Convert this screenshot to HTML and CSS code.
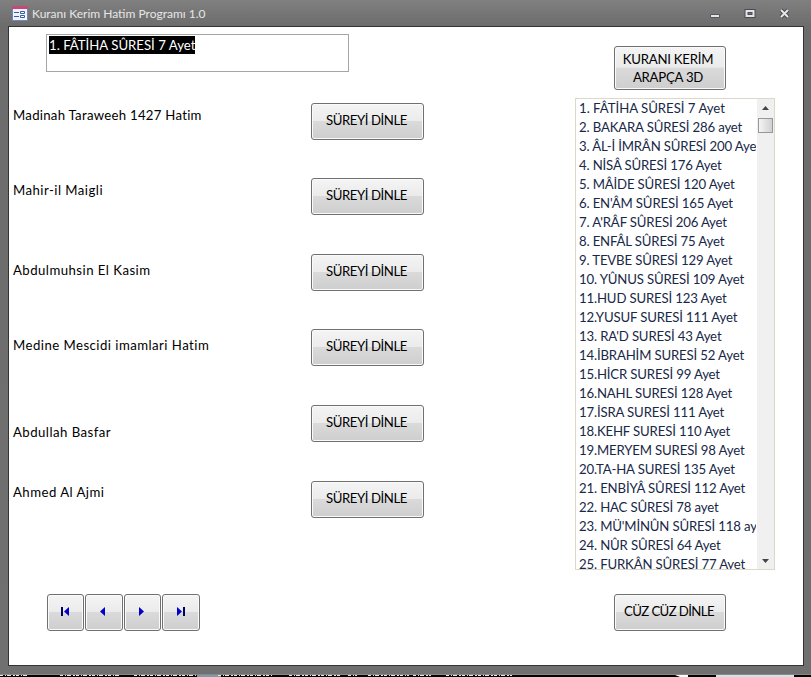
FILE: index.html
```html
<!DOCTYPE html>
<html lang="tr">
<head>
<meta charset="utf-8">
<title>Kuranı Kerim Hatim Programı 1.0</title>
<link rel="stylesheet" href="styles.css">
</head>
<body>
<div class="window">
  <header class="titlebar">
    <svg class="app-icon" width="16" height="15" viewBox="0 0 16 15"><rect x=".5" y=".5" width="15" height="14" fill="#eef4ff" stroke="#7486b8"/><path d="M0 0h16v3H0z" fill="#c34a72"/><path d="M2 6.500h5M2 10.500h5" stroke="#3c5a9c"/><path d="M8.500 5.500h4v2h-4zM8.500 9.500h4v2h-4z" fill="#fff" stroke="#3c5a9c"/></svg>
    <h1>Kuranı Kerim Hatim Programı 1.0</h1>
    <svg class="controls" width="84" height="12" viewBox="0 0 84 12"><path d="M.5 6.500h9v3h-9z" fill="#e4e4ea" stroke="#55555b"/><path d="M36.500 3h7v5h-7z" fill="none" stroke="#4c4c50" stroke-width="4"/><path d="M36.500 3h7v5h-7z" fill="none" stroke="#e4e4ea" stroke-width="2"/><path d="M71 2l7 7M78 2l-7 7" stroke="#4c4c50" stroke-width="4"/><path d="M71 2l7 7M78 2l-7 7" stroke="#e4e4ea" stroke-width="2"/></svg>
  </header>
  <main class="form">
    <section class="reciters">
      <div class="current"><span>1. FÂTİHA SÛRESİ 7 Ayet</span></div>
      <div class="rows">
        <div class="row first"><label>Madinah Taraweeh 1427 Hatim</label><button>SÜREYİ DİNLE</button></div>
        <div class="row"><label>Mahir-il Maigli</label><button>SÜREYİ DİNLE</button></div>
        <div class="row lower"><label>Abdulmuhsin El Kasim</label><button>SÜREYİ DİNLE</button></div>
        <div class="row lower"><label>Medine Mescidi imamlari Hatim</label><button>SÜREYİ DİNLE</button></div>
        <div class="row lowest"><label>Abdullah Basfar</label><button>SÜREYİ DİNLE</button></div>
        <div class="row raised"><label>Ahmed Al Ajmi</label><button>SÜREYİ DİNLE</button></div>
      </div>
      <nav class="pager">
        <button aria-label="İlk"><svg width="9" height="9" viewBox="0 0 9 9"><path d="M0 0h2v9H0z" fill="#000060"/><path d="M8 0v9L3 4.500z" fill="#0000c8"/></svg></button>
        <button aria-label="Önceki"><svg width="9" height="9" viewBox="0 0 9 9"><path d="M6 0v9L1 4.500z" fill="#0000c8"/></svg></button>
        <button aria-label="Sonraki"><svg width="9" height="9" viewBox="0 0 9 9"><path d="M2 0v9l5-4.500z" fill="#0000c8"/></svg></button>
        <button aria-label="Son"><svg width="9" height="9" viewBox="0 0 9 9"><path d="M7 0h2v9H7z" fill="#000060"/><path d="M1 0v9l5-4.500z" fill="#0000c8"/></svg></button>
      </nav>
    </section>
    <aside class="side">
      <button class="arabic">KURANI KERİM<br>ARAPÇA 3D</button>
      <div class="listbox">
        <ul>
          <li>1. FÂTİHA SÛRESİ 7 Ayet</li><li>2. BAKARA SÛRESİ 286 ayet</li><li>3. ÂL-İ İMRÂN SÛRESİ 200 Ayet</li><li>4. NİSÂ SÛRESİ 176 Ayet</li><li>5. MÂİDE SÛRESİ 120 Ayet</li><li>6. EN'ÂM SÛRESİ 165 Ayet</li><li>7. A'RÂF SÛRESİ 206 Ayet</li><li>8. ENFÂL SÛRESİ 75 Ayet</li><li>9. TEVBE SÛRESİ 129 Ayet</li><li>10. YÛNUS SÛRESİ 109 Ayet</li><li>11.HUD SURESİ 123 Ayet</li><li>12.YUSUF SURESİ 111 Ayet</li><li>13. RA'D SURESİ 43 Ayet</li><li>14.İBRAHİM SURESİ 52 Ayet</li><li>15.HİCR SURESİ 99 Ayet</li><li>16.NAHL SURESİ 128 Ayet</li><li>17.İSRA SURESİ 111 Ayet</li><li>18.KEHF SURESİ 110 Ayet</li><li>19.MERYEM SURESİ 98 Ayet</li><li>20.TA-HA SURESİ 135 Ayet</li><li>21. ENBİYÂ SÛRESİ 112 Ayet</li><li>22. HAC SÛRESİ 78 ayet</li><li>23. MÜ'MİNÛN SÛRESİ 118 ayet</li><li>24. NÛR SÛRESİ 64 Ayet</li><li>25. FURKÂN SÛRESİ 77 Ayet</li>
        </ul>
        <div class="scrollbar">
          <svg width="7" height="4" viewBox="0 0 7 4"><path d="M0 4h7L3.500 0z" fill="#444"/></svg>
          <i class="thumb"></i>
          <svg class="down" width="7" height="4" viewBox="0 0 7 4"><path d="M0 0h7L3.500 4z" fill="#444"/></svg>
        </div>
      </div>
      <button class="juz">CÜZ CÜZ DİNLE</button>
    </aside>
  </main>
</div>
<svg class="desktop" width="811" height="2" viewBox="0 0 811 2">
  <path d="M197 0h24v2h-24z" fill="#7d9aa8"/>
  <path d="M0 .5h27M60 .5h60M134 .5h62M218 .5h54M289 .5h53M348 .5h9M368 .5h41M413 .5h18M446 .5h66" stroke="#e8e8e8" stroke-dasharray="3 2 1 1 4 2 2 1"/>
  <path d="M675 0h13v2h-8z" fill="#fff"/><path d="M716 0h78v2h-78z" fill="#d4e3ea"/>
</svg>
</body>
</html>
```
FILE: styles.css
```css
* { box-sizing: border-box; }
body { margin: 0; width: 811px; height: 677px; overflow: hidden; background: #000; color: #000; font: 13.2px/19px Lato, "Open Sans", sans-serif; }
.window { height: 675px; padding: 0 7px 9px 8px; background: linear-gradient(#808080, #6c6c6c 26px, #707070); border-bottom: 1px solid #898989; }
.titlebar { display: flex; align-items: center; height: 26px; padding: 1px 10px 0 4px; }
.titlebar h1 { flex: 1; margin: 0 0 0 4px; font-size: 12px; font-weight: 400; color: #e6e6e6; white-space: nowrap; }
.form { display: flex; justify-content: space-between; height: 640px; border: 1px solid #333; background: #fff; padding: 0 28px 0 4px; }
.reciters { width: 411px; padding-top: 7px; }
.current { width: 303px; height: 38px; margin-left: 33px; border: 1px solid #a5a5a5; padding: 1px 2px; }
.current span { display: inline-block; height: 18px; line-height: 19px; background: #000; color: #fff; white-space: nowrap; }
.rows { display: grid; grid-auto-rows: 75.6px; margin-top: 30.7px; }
.row { display: flex; justify-content: space-between; align-items: flex-start; }
label { padding-top: 3px; letter-spacing: .46px; white-space: nowrap; }
.first label { letter-spacing: .27px; }
.lower label { padding-top: 7px; }
.lowest label { padding-top: 18px; }
.raised label { padding-top: 2px; }
button { display: flex; align-items: center; justify-content: center; width: 113px; height: 37px; padding: 0 2px 2px 0; border: 1px solid #707070; border-radius: 3px; background: linear-gradient(#f4f4f4, #ebebeb 48%, #dadada 50%, #cecece); box-shadow: inset 0 0 0 1px #fafafa; font: inherit; letter-spacing: -.43px; color: #000; white-space: nowrap; }
.pager { display: flex; gap: 1px; margin: 37.3px 0 0 34px; }
.pager button { width: 37.4px; padding-left: 1px; }
.side { display: flex; flex-direction: column; width: 200px; padding-top: 19px; }
.side > button { width: 112px; margin-left: 39px; }
.side > .arabic { height: 44px; line-height: 18px; padding: 0 4px 1px 0; letter-spacing: -.25px; }
.side > .juz { letter-spacing: -.6px; }
.listbox { display: flex; justify-content: space-between; height: 472px; margin: 8px 0 24px; border: 1px solid #dcd9c8; overflow: hidden; color: #182848; }
ul { width: 180px; margin: 0; padding: 0 0 0 3px; list-style: none; overflow: hidden; white-space: nowrap; letter-spacing: -.16px; }
li:first-child { letter-spacing: -.02px; }
.scrollbar { display: flex; flex-direction: column; align-items: center; width: 17px; padding: 7px 0 6px; background: #f0f0f0; }
.thumb { width: 15px; height: 15px; margin-top: 8px; border: 1px solid #979797; background: linear-gradient(90deg, #f5f5f5, #d0d0d0); }
.down { margin-top: auto; }
.desktop { display: block; }
```
